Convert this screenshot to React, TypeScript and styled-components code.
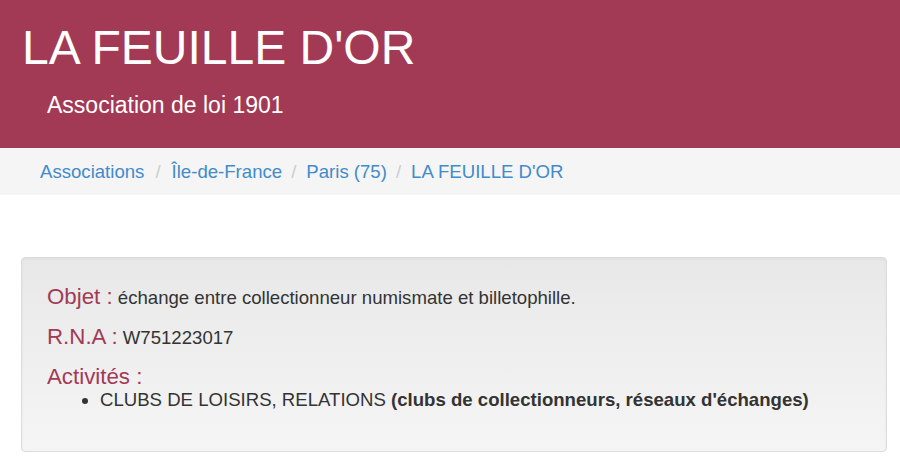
import React from 'react';
import styled, { createGlobalStyle } from 'styled-components';

const WINE = '#a33a55';
const LINK = '#428bca';

const GlobalStyle = createGlobalStyle`
  html, body {
    margin: 0;
    padding: 0;
    background: #fff;
    font-family: "Liberation Sans", Arial, sans-serif;
    color: #333;
  }
`;

const Header = styled.header`
  background: ${ WINE };
  color: #fff;
  padding: 21px 22px 0;
  height: 148px;
  box-sizing: border-box;
`;

const Title = styled.h1`
  margin: 0;
  font-size: 48px;
  font-weight: 400;
  line-height: 54px;
`;

const Subtitle = styled.p`
  margin: 15px 0 0 25px;
  font-size: 23px;
  line-height: 30px;
`;

const Breadcrumb = styled.ol`
  display: flex;
  margin: 0;
  padding: 0 40px;
  height: 47px;
  align-items: center;
  list-style: none;
  background: #f5f5f5;
  font-size: 18.6px;
`;

const Crumb = styled.li`
  & + &::before {
    content: '/';
    color: #ccc;
    padding: 0 10px 0 9px;
  }
  &:nth-child(2)::before {
    padding: 0 11px 0 11px;
  }
`;

const CrumbLink = styled.a`
  color: ${ LINK };
  text-decoration: none;
`;

const Main = styled.main`
  padding: 62px 13px 0 21px;
`;

const Well = styled.section`
  min-height: 195px;
  box-sizing: border-box;
  padding: 24px 25px 20px;
  border: 1px solid #dcdcdc;
  border-radius: 4px;
  background: linear-gradient(to bottom, #e8e8e8 0%, #f5f5f5 100%);
  box-shadow: inset 0 1px 3px rgba(0, 0, 0, .05), 0 1px 0 rgba(255, 255, 255, .1);
`;

const Field = styled.div<{ $last?: boolean }>`
  margin-bottom: ${ p => p.$last ? 0 : 9 }px;
  font-size: 18.6px;
  line-height: 30px;
`;

const Label = styled.span`
  color: ${ WINE };
  font-size: 22.3px;
`;

const Activities = styled.ul`
  margin: -5px 0 0;
  padding-left: 53px;
  font-size: 18.6px;
  line-height: 24px;
`;

const App = () => (
  <>
    <GlobalStyle />
    <Header>
      <Title>LA FEUILLE D'OR</Title>
      <Subtitle>Association de loi 1901</Subtitle>
    </Header>

    <Breadcrumb>
      <Crumb><CrumbLink href="#">Associations</CrumbLink></Crumb>
      <Crumb><CrumbLink href="#">Île-de-France</CrumbLink></Crumb>
      <Crumb><CrumbLink href="#">Paris (75)</CrumbLink></Crumb>
      <Crumb><CrumbLink href="#">LA FEUILLE D'OR</CrumbLink></Crumb>
    </Breadcrumb>

    <Main>
      <Well>
        <Field><Label>Objet :</Label> échange entre collectionneur numismate et billetophille.</Field>
        <Field><Label>R.N.A :</Label> W751223017</Field>
        <Field $last>
          <Label>Activités :</Label>
          <Activities>
            <li>CLUBS DE LOISIRS, RELATIONS <strong>(clubs de collectionneurs, réseaux d'échanges)</strong></li>
          </Activities>
        </Field>
      </Well>
    </Main>
  </>
);

export default App;
